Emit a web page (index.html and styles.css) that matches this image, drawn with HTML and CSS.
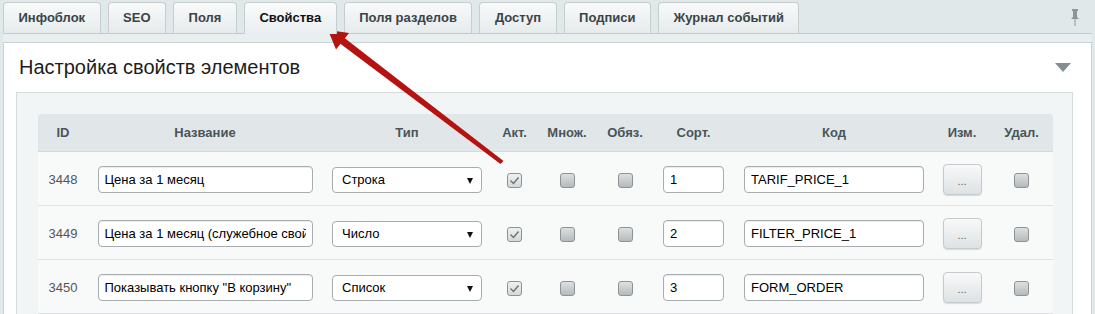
FILE: index.html
```html
<!DOCTYPE html>
<html lang="ru">
<head>
  <meta charset="UTF-8" />
  <title>Настройка свойств элементов</title>
  <link rel="stylesheet" href="styles.css">
</head>
<body>

<div class="page">
  <!-- Tabs -->
  <div class="tabs">
    <div class="tab">Инфоблок</div>
    <div class="tab">SEO</div>
    <div class="tab">Поля</div>
    <div class="tab active">Свойства</div>
    <div class="tab">Поля разделов</div>
    <div class="tab">Доступ</div>
    <div class="tab">Подписи</div>
    <div class="tab">Журнал событий</div>
    <svg class="pin" width="10" height="17" viewBox="0 0 10 17">
      <path d="M2 0h6v2H7v6l2 2H1l2-2V2H2z" fill="#8c9597"/>
      <rect x="4.5" y="10" width="1" height="7" fill="#8c9597"/>
    </svg>
  </div>
  <div class="tab-band"></div>

  <!-- Panel -->
  <div class="panel">
    <div class="panel-head">
      <h2>Настройка свойств элементов</h2>
      <span class="collapse"></span>
    </div>

    <div class="props">
      <table class="prop-table">
        <colgroup>
          <col class="c-id"><col class="c-name"><col class="c-type"><col class="c-act">
          <col class="c-mult"><col class="c-req"><col class="c-sort"><col class="c-code">
          <col class="c-edit"><col class="c-del">
        </colgroup>
        <thead>
          <tr>
            <th>ID</th>
            <th>Название</th>
            <th>Тип</th>
            <th>Акт.</th>
            <th>Множ.</th>
            <th>Обяз.</th>
            <th>Сорт.</th>
            <th>Код</th>
            <th>Изм.</th>
            <th>Удал.</th>
          </tr>
        </thead>
        <tbody>
          <tr>
            <td class="id">3448</td>
            <td><input class="txt name" type="text" value="Цена за 1 месяц"></td>
            <td><span class="sel">Строка</span></td>
            <td><span class="chk on"><svg width="11" height="9" viewBox="0 0 11 9"><path d="M1.5 4.5l3 3 5-6" fill="none" stroke="#6a7274" stroke-width="1.4"/></svg></span></td>
            <td><span class="chk"></span></td>
            <td><span class="chk"></span></td>
            <td><input class="txt sort" type="text" value="1"></td>
            <td><input class="txt code" type="text" value="TARIF_PRICE_1"></td>
            <td><button class="more">...</button></td>
            <td><span class="chk"></span></td>
          </tr>
          <tr>
            <td class="id">3449</td>
            <td><input class="txt name" type="text" value="Цена за 1 месяц (служебное свойство)"></td>
            <td><span class="sel">Число</span></td>
            <td><span class="chk on"><svg width="11" height="9" viewBox="0 0 11 9"><path d="M1.5 4.5l3 3 5-6" fill="none" stroke="#6a7274" stroke-width="1.4"/></svg></span></td>
            <td><span class="chk"></span></td>
            <td><span class="chk"></span></td>
            <td><input class="txt sort" type="text" value="2"></td>
            <td><input class="txt code" type="text" value="FILTER_PRICE_1"></td>
            <td><button class="more">...</button></td>
            <td><span class="chk"></span></td>
          </tr>
          <tr>
            <td class="id">3450</td>
            <td><input class="txt name" type="text" value="Показывать кнопку &quot;В корзину&quot;"></td>
            <td><span class="sel">Список</span></td>
            <td><span class="chk on"><svg width="11" height="9" viewBox="0 0 11 9"><path d="M1.5 4.5l3 3 5-6" fill="none" stroke="#6a7274" stroke-width="1.4"/></svg></span></td>
            <td><span class="chk"></span></td>
            <td><span class="chk"></span></td>
            <td><input class="txt sort" type="text" value="3"></td>
            <td><input class="txt code" type="text" value="FORM_ORDER"></td>
            <td><button class="more">...</button></td>
            <td><span class="chk"></span></td>
          </tr>
        </tbody>
      </table>
    </div>
  </div>
</div>

<!-- Red pointer arrow drawn over the page -->
<svg class="pointer" width="1095" height="314" viewBox="0 0 1095 314">
  <polygon points="503.5,161 500.5,164 340,43.5 344.5,38" fill="#b51212"/>
  <polygon points="328,30 349,33 336,49.5" fill="#b51212"/>
</svg>

</body>
</html>
```

FILE: styles.css
```css
body {
  margin: 0;
  height: 314px;
  overflow: hidden;
  background-color: #e1e8ea;
  font-family: "Liberation Sans", Arial, sans-serif;
  font-size: 13px;
  color: #000;
}

.page {
  margin: 0 3px;
}

/* Tabs */
.tabs {
  display: flex;
  align-items: flex-end;
  gap: 7px;
  height: 31px;
  padding-top: 2px;
}

.tab {
  height: 30px;
  line-height: 30px;
  padding: 0 14.5px;
  border: 1px solid #c6ced0;
  border-bottom: none;
  border-radius: 4px 4px 0 0;
  background: linear-gradient(#f8fafa, #e6ebec);
  font-weight: bold;
  color: #3a4447;
}

.tab.active {
  position: relative;
  z-index: 1;
  height: 31px;
  margin-bottom: -1px;
  background: linear-gradient(#fafbfb, #e9eef0);
  color: #111;
}

.pin {
  margin-left: auto;
  margin-right: 12px;
  align-self: center;
}

.tab-band {
  height: 8px;
  background-color: #e9eef0;
  border-top: 1px solid #c3cbcd;
}

/* Panel */
.panel {
  background-color: #fff;
  border: 1px solid #ccd3d5;
  border-bottom: none;
  padding: 0 18px 0 12px;
  height: 400px;
}

.panel-head {
  display: flex;
  align-items: center;
  padding: 12px 2px 0 3px;
  margin-bottom: 13px;
}

.panel-head h2 {
  flex: 1;
  margin: 0;
  font-size: 20px;
  line-height: 24px;
  font-weight: normal;
  color: #1d1d1d;
}

.collapse {
  width: 0;
  height: 0;
  border-left: 8px solid transparent;
  border-right: 8px solid transparent;
  border-top: 9px solid #858e90;
}

.props {
  background-color: #f2f5f6;
  border: 1px solid #d5dcde;
  padding: 21px 19px 0 21px;
}

/* Properties table */
.prop-table {
  width: 100%;
  table-layout: fixed;
  border-collapse: separate;
  border-spacing: 0;
}

.c-id { width: 50px; }
.c-name { width: 234px; }
.c-type { width: 170px; }
.c-act { width: 45px; }
.c-mult { width: 60px; }
.c-req { width: 56px; }
.c-sort { width: 81px; }
.c-code { width: 200px; }
.c-edit { width: 56px; }
.c-del { width: 63px; }

.prop-table th {
  height: 37px;
  padding: 0;
  background-color: #e1e7e9;
  color: #4a5558;
  font-weight: bold;
  text-align: center;
  border-bottom: 1px solid #d3dadc;
}

.prop-table th:first-child {
  border-top-left-radius: 3px;
}

.prop-table th:last-child {
  border-top-right-radius: 3px;
}

.prop-table td {
  height: 51px;
  padding: 2px 0 0;
  text-align: center;
  vertical-align: middle;
  background-color: #f8f9f9;
  border-bottom: 1px solid #dfe3e5;
}

.prop-table td.id {
  color: #555;
}

.txt {
  height: 27px;
  box-sizing: border-box;
  border: 1px solid #a7adaf;
  border-radius: 4px;
  padding: 0 6px;
  background-color: #fff;
  box-shadow: inset 0 1px 1px rgba(0, 0, 0, 0.08);
  font-family: "Liberation Sans", Arial, sans-serif;
  font-size: 13px;
  color: #000;
  vertical-align: middle;
}

.txt.name { width: 215px; }
.txt.sort { width: 61px; }
.txt.code { width: 180px; }

.sel {
  position: relative;
  display: inline-block;
  width: 150px;
  height: 26px;
  line-height: 24px;
  box-sizing: border-box;
  border: 1px solid #a7adaf;
  border-radius: 4px;
  padding-left: 9px;
  background-color: #fff;
  text-align: left;
  vertical-align: middle;
}

.sel::after {
  content: "";
  position: absolute;
  right: 8px;
  top: 10px;
  border-left: 3px solid transparent;
  border-right: 3px solid transparent;
  border-top: 6px solid #111;
}

.chk {
  display: inline-flex;
  align-items: center;
  justify-content: center;
  width: 13px;
  height: 13px;
  border: 1px solid #8d9395;
  border-radius: 3px;
  background: linear-gradient(#dde0e1, #b5babc);
  vertical-align: middle;
}

.chk.on {
  background: linear-gradient(#eff1f1, #d4d8d9);
}

.more {
  width: 39px;
  height: 31px;
  border: 1px solid #c5cbcd;
  border-radius: 4px;
  background: linear-gradient(#f8f9f9, #dde2e4);
  box-shadow: 0 1px 1px rgba(0, 0, 0, 0.12);
  color: #5a6366;
  font-family: "Liberation Sans", Arial, sans-serif;
  font-size: 11px;
  padding: 2px 0 0;
  vertical-align: middle;
}

/* Red arrow overlay */
.pointer {
  position: absolute;
  top: 0;
  left: 0;
  pointer-events: none;
}
```
